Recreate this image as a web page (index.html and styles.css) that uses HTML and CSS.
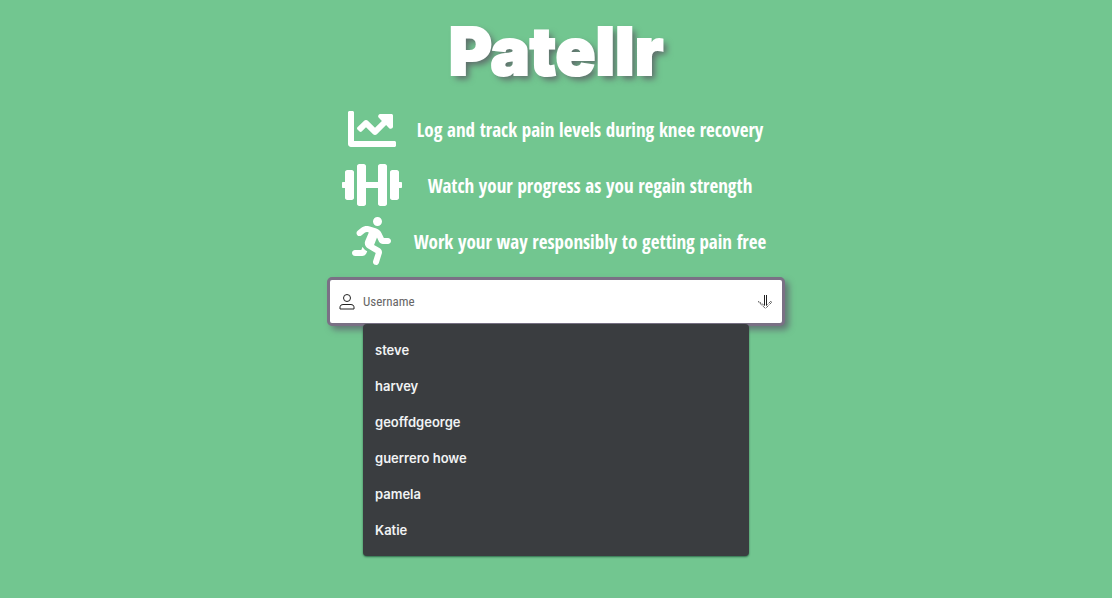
FILE: index.html
```html
<!DOCTYPE html>
<html lang="en">
<head>
<meta charset="utf-8">
<meta name="viewport" content="width=device-width, initial-scale=1">
<title>Patellr</title>
<link rel="stylesheet" href="styles.css">
</head>
<body>
<main class="landing">
  <h1 class="brand">Patellr</h1>
  <ul class="features">
    <li class="feature">
      <svg class="feature-icon" viewBox="0 0 512 512" aria-hidden="true"><path d="M496 384H64V80c0-8.84-7.16-16-16-16H16C7.16 64 0 71.16 0 80v336c0 17.67 14.33 32 32 32h464c8.84 0 16-7.16 16-16v-32c0-8.84-7.16-16-16-16zM464 96H345.94c-21.38 0-32.09 25.85-16.97 40.97l32.4 32.4L288 242.75l-73.37-73.37c-12.5-12.5-32.76-12.5-45.25 0l-68.69 68.69c-6.25 6.25-6.25 16.38 0 22.63l22.62 22.62c6.25 6.25 16.38 6.25 22.63 0L192 237.25l73.37 73.37c12.5 12.5 32.76 12.5 45.25 0l96-96 32.4 32.4c15.12 15.12 40.97 4.41 40.97-16.97V112c.01-8.84-7.15-16-15.99-16z"/></svg>
      <span class="feature-text">Log and track pain levels during knee recovery</span>
    </li>
    <li class="feature">
      <svg class="feature-icon" viewBox="0 0 640 512" aria-hidden="true"><path d="M104 96H56c-13.3 0-24 10.7-24 24v104H8c-4.4 0-8 3.6-8 8v48c0 4.4 3.6 8 8 8h24v104c0 13.3 10.7 24 24 24h48c13.3 0 24-10.7 24-24V120c0-13.3-10.7-24-24-24zm528 128h-24V120c0-13.3-10.7-24-24-24h-48c-13.3 0-24 10.7-24 24v272c0 13.3 10.7 24 24 24h48c13.3 0 24-10.7 24-24V288h24c4.4 0 8-3.6 8-8v-48c0-4.4-3.6-8-8-8zM456 32h-48c-13.3 0-24 10.7-24 24v168H256V56c0-13.3-10.7-24-24-24h-48c-13.3 0-24 10.7-24 24v400c0 13.3 10.7 24 24 24h48c13.3 0 24-10.7 24-24V288h128v168c0 13.3 10.7 24 24 24h48c13.3 0 24-10.7 24-24V56c0-13.3-10.7-24-24-24z"/></svg>
      <span class="feature-text">Watch your progress as you regain strength</span>
    </li>
    <li class="feature">
      <svg class="feature-icon" viewBox="0 0 416 512" aria-hidden="true"><path d="M272 96c26.51 0 48-21.49 48-48S298.51 0 272 0s-48 21.49-48 48 21.49 48 48 48zM113.69 317.47l-14.8 34.52H32c-17.67 0-32 14.33-32 32s14.33 32 32 32h77.45c19.25 0 36.58-11.44 44.11-29.09l8.79-20.52-10.67-6.3c-17.32-10.23-30.06-25.37-37.99-42.61zM384 223.99h-44.03l-26.06-53.25c-12.5-25.55-35.45-44.23-61.78-50.94l-71.08-21.14c-28.3-6.8-57.77-.55-80.84 17.14l-39.67 30.41c-14.03 10.75-16.69 30.83-5.94 44.86s30.84 16.69 44.86 5.94l39.67-30.41c7.67-5.89 17.44-8 25.27-6.14l14.7 4.37-37.46 87.39c-12.62 29.48-1.31 64.01 26.3 80.31l84.98 50.17-27.47 87.73c-5.28 16.86 4.11 34.82 20.97 40.1 3.19 1 6.41 1.48 9.58 1.48 13.61 0 26.23-8.77 30.52-22.45l31.64-101.06c5.91-20.77-2.89-43.08-21.64-54.13l-61.24-36.14 31.31-78.28 20.27 41.43c8 16.34 24.92 26.89 43.11 26.89H384c17.67 0 32-14.33 32-32s-14.33-31.99-32-31.99z"/></svg>
      <span class="feature-text">Work your way responsibly to getting pain free</span>
    </li>
  </ul>
  <form class="login">
    <div class="field">
      <svg class="user-icon" viewBox="0 0 16 16" aria-hidden="true"><circle cx="8" cy="4" r="3.500"/><path d="M1 15v-2.200Q1.400 10.500 4 10.500h8q2.600 0 3 2.300V15z"/></svg>
      <input class="username" type="text" placeholder="Username" aria-label="Username" autocomplete="off">
      <button class="submit" type="submit" aria-label="Continue">
        <svg class="arrow-icon" viewBox="0 0 16 16" aria-hidden="true"><path d="M7.500 1v10.500M9.500 1v10.500"/><path class="arrow-dots" d="M1.500 7.500l6 4M1.500 8l7 6.500L15 8l-1-1-4.500 4.500"/></svg>
      </button>
    </div>
    <ul class="suggestions">
      <li><button class="suggestion" type="button">steve</button></li>
      <li><button class="suggestion" type="button">harvey</button></li>
      <li><button class="suggestion" type="button">geoffdgeorge</button></li>
      <li><button class="suggestion" type="button">guerrero howe</button></li>
      <li><button class="suggestion" type="button">pamela</button></li>
      <li><button class="suggestion" type="button">Katie</button></li>
    </ul>
  </form>
</main>
</body>
</html>
```

FILE: styles.css
```css
* {
  box-sizing: border-box;
}

body {
  margin: 0;
  min-height: 100vh;
  background: #72c690;
  color: #fff;
  font-family: "Open Sans Condensed", "Roboto Condensed", Roboto, sans-serif;
}

.landing {
  display: flex;
  flex-direction: column;
  align-items: center;
  padding: 13px 16px;
}

.brand {
  margin: 0 0 12px;
  font-family: Inter, sans-serif;
  font-size: 66px;
  font-weight: 900;
  line-height: 76px;
  text-shadow: 4px 4px 6px #5f6d6b;
  -webkit-text-stroke: 2px #fff;
}

.features {
  display: grid;
  grid-template-columns: 60px auto;
  gap: 8px 12px;
  margin: 0;
  padding: 4px 4px 12px 0;
  list-style: none;
}

.feature {
  display: grid;
  grid-column: span 2;
  grid-template-columns: subgrid;
  align-items: center;
  justify-items: center;
}

.feature-icon {
  height: 48px;
  fill: #fff;
}

.feature-text {
  padding-top: 2px;
  font-size: 19px;
  font-weight: 700;
  line-height: 28px;
}

.login {
  position: relative;
  width: 100%;
  max-width: 458px;
}

.field {
  display: flex;
  align-items: center;
  padding: 0 9px;
  background: #fff;
  border: 3px solid #7a7085;
  border-radius: 5px;
  box-shadow: 4px 4px 6px #637a76;
}

.user-icon {
  width: 16px;
  height: 16px;
  fill: none;
  stroke: #222;
}

.username {
  flex: 1;
  min-width: 0;
  height: 43px;
  padding: 0 8px;
  border: 0;
  outline: 0;
  background: transparent;
  color: #333;
  font-family: "Roboto Condensed", "Open Sans Condensed", sans-serif;
  font-size: 13px;
  font-weight: 400;
}

.username::placeholder {
  color: #666;
}

.submit {
  display: flex;
  padding: 0;
  border: 0;
  background: transparent;
}

.arrow-icon {
  width: 16px;
  height: 16px;
  fill: none;
  stroke: #222;
}

.arrow-dots {
  stroke-dasharray: 1 1;
}

.suggestions {
  position: absolute;
  top: 47px;
  left: 36px;
  right: 36px;
  margin: 0;
  padding: 8px 0;
  list-style: none;
  background: #3a3d40;
  border-radius: 4px;
  box-shadow: 0 1px 2px #2f6b4b;
}

.suggestion {
  display: block;
  width: 100%;
  padding: 0 12px;
  border: 0;
  background: transparent;
  color: #f1f3f4;
  font-family: Inter, sans-serif;
  font-size: 13px;
  font-weight: 600;
  line-height: 36px;
  text-align: left;
}
```
